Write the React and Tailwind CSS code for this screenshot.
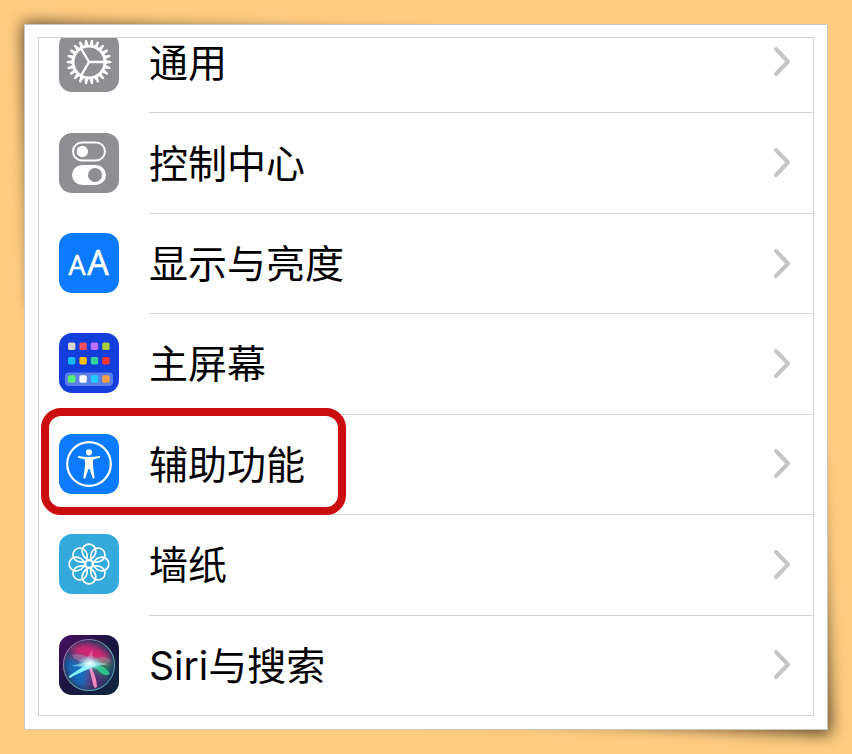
const teeth = Array.from({ length: 22 }, (_, i) => (i * 360) / 22);
const petals = [0, 45, 90, 135, 180, 225, 270, 315];

const apps = [
  ['#d6d6d0', '#ff4f62', '#c070ff', '#a9cf38'],
  ['#18b9ff', '#ffc107', '#36d39a', '#ff3434'],
  ['#55f070', '#ffffff', '#20ccff', '#ff9a45'],
];

function GeneralIcon() {
  return (
    <svg viewBox="0 0 60 60" className="h-15 w-15">
      <rect width="60" height="60" rx="13" fill="#8e8e93" />
      <g transform="translate(30 30)" fill="#fff">
        {teeth.map((angle) => (
          <path key={angle} d="M-1.9 -16.5 L-1.1 -22 Q0 -22.9 1.1 -22 L1.9 -16.5Z" transform={`rotate(${angle + 90})`} />
        ))}
        <circle r="15.9" fill="none" stroke="#fff" strokeWidth="2.8" />
        <g stroke="#fff" strokeWidth="2.4">
          <path d="M0 0H15.5M0 0L-7.8 -13.4M0 0L-7.8 13.4" />
        </g>
      </g>
    </svg>
  );
}

function ControlIcon() {
  return (
    <svg viewBox="0 0 60 60" className="h-15 w-15">
      <rect width="60" height="60" rx="13" fill="#8e8e93" />
      <rect x="14" y="9.5" width="32" height="18" rx="9" fill="none" stroke="#fff" strokeWidth="2" />
      <circle cx="23.3" cy="18.5" r="5.7" fill="#fff" />
      <rect x="13" y="32" width="34" height="20" rx="10" fill="#fff" />
      <circle cx="36" cy="42" r="7" fill="#8e8e93" />
    </svg>
  );
}

function DisplayIcon() {
  return (
    <svg viewBox="0 0 60 60" className="h-15 w-15" fill="#fff" fontFamily="Open Sans, sans-serif">
      <rect width="60" height="60" rx="13" fill="#0a7aff" />
      <g stroke="#fff" strokeWidth="0.6" strokeLinejoin="round" textAnchor="middle">
        <text x="18" y="42" fontSize="27">A</text>
        <text x="39" y="42" fontSize="34">A</text>
      </g>
    </svg>
  );
}

function HomeIcon() {
  return (
    <svg viewBox="0 0 60 60" className="h-15 w-15">
      <rect width="60" height="60" rx="13" fill="#143edb" />
      <rect x="6" y="39.5" width="48" height="13.5" rx="4" fill="#5a7ee8" />
      {apps.map((row, r) =>
        row.map((color, c) => (
          <rect key={color} x={9 + c * 11.4} y={[9.5, 24, 42.3][r]} width="7.4" height="7.4" rx="1.6" fill={color} />
        ))
      )}
    </svg>
  );
}

function AccessibilityIcon() {
  return (
    <svg viewBox="0 0 60 60" className="h-15 w-15">
      <rect width="60" height="60" rx="13" fill="#0a7aff" />
      <circle cx="30" cy="30" r="21.8" fill="none" stroke="#fff" strokeWidth="2.2" />
      <circle cx="30" cy="18.3" r="3.1" fill="#fff" />
      <path
        d="M19.6 22 Q30 24 40.4 22 Q41.6 22.2 41 23.8 L34.2 25.6 Q33.4 31.5 35.7 43.6 Q35 45.3 33.7 44.2 L30.6 35 H29.4 L26.3 44.2 Q25 45.3 24.3 43.6 Q26.6 31.5 25.8 25.6 L19 23.8 Q18.4 22.2 19.6 22Z"
        fill="#fff"
      />
    </svg>
  );
}

function WallpaperIcon() {
  return (
    <svg viewBox="0 0 60 60" className="h-15 w-15">
      <rect width="60" height="60" rx="13" fill="#34aadc" />
      <g transform="translate(30 30)" fill="none" stroke="#fff" strokeWidth="1.7">
        <circle r="3.6" />
        {petals.map((angle) => (
          <path
            key={angle}
            d="M0 -3.8 C-4.5 -6 -6.8 -9.5 -6.8 -13 A6.8 6.8 0 0 1 6.8 -13 C6.8 -9.5 4.5 -6 0 -3.8Z"
            transform={`rotate(${angle})`}
          />
        ))}
      </g>
    </svg>
  );
}

function SiriIcon() {
  return (
    <svg viewBox="0 0 60 60" className="h-15 w-15">
      <defs>
        <linearGradient id="siriBack" x1="0" y1="0" x2="1" y2="1">
          <stop offset="0" stopColor="#4b0d63" />
          <stop offset="0.5" stopColor="#17153f" />
          <stop offset="1" stopColor="#10283f" />
        </linearGradient>
        <linearGradient id="siriRim" x1="0" y1="0" x2="1" y2="1">
          <stop offset="0" stopColor="#b05cae" />
          <stop offset="0.5" stopColor="#6aa8a5" />
          <stop offset="1" stopColor="#4a9fc0" />
        </linearGradient>
        <radialGradient id="siriGlow">
          <stop offset="0" stopColor="#fff" />
          <stop offset="0.3" stopColor="#c8fbff" stopOpacity="0.8" />
          <stop offset="1" stopColor="#7be8ff" stopOpacity="0" />
        </radialGradient>
        <filter id="siriBlur" x="-50%" y="-50%" width="200%" height="200%">
          <feGaussianBlur stdDeviation="3.5" />
        </filter>
        <filter id="siriSoft">
          <feGaussianBlur stdDeviation="0.6" />
        </filter>
        <clipPath id="siriBall">
          <circle cx="30" cy="30" r="25" />
        </clipPath>
      </defs>
      <rect width="60" height="60" rx="13" fill="url(#siriBack)" />
      <g clipPath="url(#siriBall)">
        <circle cx="30" cy="30" r="25" fill="#263760" />
        <g filter="url(#siriBlur)">
          <path d="M10 16 Q28 -1 51 21 L49 27 L30 25 L16 20Z" fill="#d92576" />
          <path d="M7 22 L30 30 L27 54 Q10 50 7 30Z" fill="#126dc0" />
          <path d="M30 28 L54 27 L47 41Z" fill="#168c69" />
          <path d="M29 32 L45 41 L39 53 L29 54Z" fill="#5b2b75" />
        </g>
        <g filter="url(#siriSoft)">
          <path d="M29 29 Q15 26 13 20 Q24 16 35 27Z" fill="#c9a0d0" opacity="0.4" />
          <path d="M24 29 Q29 22 33 15 L35 29Z" fill="#ffa6cd" opacity="0.4" />
          <path d="M31 27 Q44 18 52 25 Q50 30 31 30Z" fill="#9a9ea8" opacity="0.35" />
          <path d="M30 28 Q45 30 51 38 Q48 43 41 37Z" fill="#32dfa0" opacity="0.75" />
          <path d="M29 28 Q37 38 38 51 Q36 56 34 49Z" fill="#ff92c8" opacity="0.9" />
          <path d="M31 27 L10 41 Q10 45 14 41 L36 31Z" fill="#87f5ff" />
          <path d="M12 31 Q22 28 31 27 L50 29 L31 32Z" fill="#9ff7ff" opacity="0.6" />
        </g>
        <ellipse cx="31" cy="28.5" rx="13" ry="8" fill="url(#siriGlow)" />
      </g>
      <circle cx="30" cy="30" r="25.5" fill="none" stroke="url(#siriRim)" strokeWidth="1.1" />
    </svg>
  );
}

const items = [
  { label: '通用', Icon: GeneralIcon },
  { label: '控制中心', Icon: ControlIcon },
  { label: '显示与亮度', Icon: DisplayIcon },
  { label: '主屏幕', Icon: HomeIcon },
  { label: '辅助功能', Icon: AccessibilityIcon, highlighted: true },
  { label: '墙纸', Icon: WallpaperIcon },
  { label: 'Siri与搜索', Icon: SiriIcon },
];

function SettingsRow({ label, Icon, highlighted }) {
  return (
    <li className="group relative min-h-25">
      <a href="#" className="flex h-full items-center gap-[30px] pl-5 text-[39px] leading-none text-black">
        <Icon />
        <span className="flex flex-1 items-center justify-between self-stretch border-t border-[#d4d4d6] pr-[21px] group-first:border-t-0">
          {label}
          <svg viewBox="0 0 20 32" className="h-8 w-5" fill="none" stroke="#c5c5c8" strokeWidth="4" strokeLinecap="round" strokeLinejoin="round">
            <path d="M4 3L16 15.5L4 28" />
          </svg>
        </span>
      </a>
      {highlighted && (
        <div className="pointer-events-none absolute -top-1.5 left-0.5 z-10 h-[107px] w-[305px] rounded-[20px] border-8 border-[#cb0d0f]" />
      )}
    </li>
  );
}

export default function App() {
  return (
    <main className="flex min-h-screen bg-[#ffcc80] p-6 font-['Inter','Noto_Sans_CJK_SC',sans-serif]">
      <div className="relative isolate flex flex-1">
        <div className="absolute top-0 left-0 -z-10 h-2/5 w-1/2 origin-top-left skew-x-2 skew-y-2 shadow-[0_0_16px_1px_rgba(0,0,0,0.7)]" />
        <div className="absolute right-0 bottom-0 -z-10 h-2/5 w-1/2 origin-bottom-right skew-x-3 skew-y-3 shadow-[2px_3px_16px_1px_rgba(0,0,0,0.7)]" />
        <section className="flex flex-1 border border-[#c8c8c8] bg-white px-[13px] pt-3 pb-[13px]">
          <div className="flex flex-1 overflow-hidden border border-[#d2d2d2]">
            {/* the list is scrolled, so its first row is partly cut off */}
            <ul className="-mt-[26px] grid flex-1 auto-rows-fr">
              {items.map((item) => (
                <SettingsRow key={item.label} {...item} />
              ))}
            </ul>
          </div>
        </section>
      </div>
    </main>
  );
}
